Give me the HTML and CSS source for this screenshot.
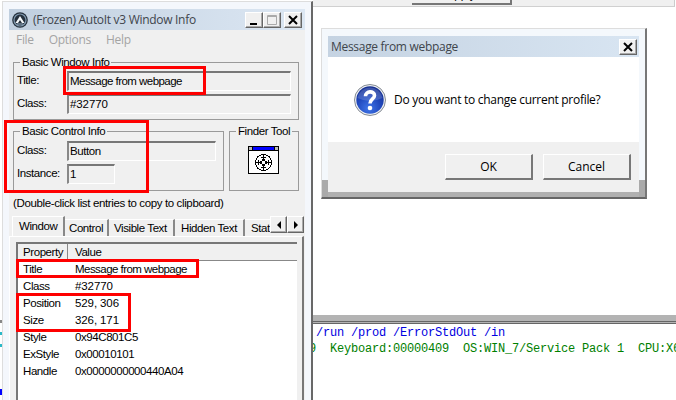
FILE: index.html
```
<!DOCTYPE html>
<html lang="en">
<head>
<meta charset="utf-8">
<title>AutoIt v3 Window Info</title>
<link rel="stylesheet" href="styles.css">
</head>
<body>
<main class="desktop">
  <section class="backdrop">
    <div class="edge"><i></i><i></i><i></i><i></i></div>
    <div class="editor">
      <div class="apply-bar"><span class="apply"><b>Apply</b></span></div>
      <div class="blank"></div>
      <div class="splitter"></div>
      <div class="console">
        <div class="blue">/run /prod /ErrorStdOut /in</div>
        <div class="green">9&nbsp; Keyboard:00000409&nbsp; OS:WIN_7/Service Pack 1&nbsp; CPU:X64</div>
      </div>
    </div>
  </section>

  <section class="window info">
    <header class="titlebar">
      <svg class="logo" width="16" height="16" viewBox="0 0 16 16"><circle cx="8" cy="8" r="7.8" fill="#25303c"/><circle cx="8" cy="8" r="6" fill="none" stroke="#7e97ad" stroke-width="1.2"/><path d="M3.500 11 8 4 12.500 11H10L8 8 6 11Z" fill="#f4f8fb"/><path d="M5 12H11" stroke="#9eb5c9"/></svg>
      <h1>(Frozen) AutoIt v3 Window Info</h1>
      <div class="caption">
        <span class="cap"><svg width="18" height="16"><path d="M5 12H12" stroke="#000" stroke-width="2"/></svg></span>
        <span class="cap"><svg width="18" height="16"><path d="M4.500 3.500H13.500V12.500H4.500ZM4 4.500H14" fill="none" stroke="#aaa"/></svg></span>
        <span class="cap close"><svg width="18" height="16"><path d="M5 4 13 12M13 4 5 12" stroke="#000" stroke-width="2"/></svg></span>
      </div>
    </header>
    <nav class="menu"><span>File</span><span>Options</span><span>Help</span></nav>
    <fieldset class="group window-info">
      <legend>Basic Window Info</legend>
      <div class="row"><label>Title:</label><output class="message">Message from webpage</output></div>
      <div class="row"><label>Class:</label><output class="digits">#32770</output></div>
    </fieldset>
    <div class="groups">
      <fieldset class="group control-info">
        <legend>Basic Control Info</legend>
        <div class="row"><label>Class:</label><output>Button</output></div>
        <div class="row"><label>Instance:</label><output class="short">1</output></div>
      </fieldset>
      <fieldset class="group finder">
        <legend>Finder Tool</legend>
        <svg width="31" height="28" viewBox="0 0 31 28" shape-rendering="crispEdges"><path d="M.5.500H30.500V27.500H.500Z" fill="#fff" stroke="#000"/><path d="M1 1H30V4H1Z" fill="#00f"/><path d="M1 1H4V4H1ZM27 1H30V4H27Z" fill="#bbb"/><path d="M0 4.500H31M4.500 0V4M26.500 0V4" stroke="#000"/><g fill="none" stroke="#000"><circle cx="15.500" cy="16.500" r="8"/><circle cx="15.500" cy="16.500" r="2"/><path d="M15.500 8V14M15.500 19V25M7 16.500H13M18 16.500H24M13 11.500H18M13 21.500H18M10.500 14V19M20.500 14V19M14 13.500H17M14 19.500H17M12.500 15V18M18.500 15V18"/></g></svg>
      </fieldset>
    </div>
    <p class="note">(Double-click list entries to copy to clipboard)</p>
    <div class="tabs">
      <span class="tab active">Window</span><span class="tab t2">Control</span><span class="tab t3">Visible Text</span><span class="tab t4">Hidden Text</span><span class="tab t5">Stat</span>
      <span class="scroll"><svg width="17" height="15"><path d="M10 4V12L6 8Z"/></svg></span><span class="scroll"><svg width="17" height="15"><path d="M6 4V12L10 8Z"/></svg></span>
    </div>
    <div class="panel">
      <div class="list">
        <div class="head"><span>Property</span><span>Value</span></div>
        <div class="item"><span>Title</span><span class="message">Message from webpage</span></div>
        <div class="item"><span>Class</span><span class="digits">#32770</span></div>
        <div class="item"><span>Position</span><span class="digits">529, 306</span></div>
        <div class="item"><span>Size</span><span class="digits">326, 171</span></div>
        <div class="item"><span>Style</span><span>0x94C801C5</span></div>
        <div class="item"><span>ExStyle</span><span>0x00010101</span></div>
        <div class="item"><span>Handle</span><span>0x0000000000440A04</span></div>
      </div>
    </div>
  </section>

  <section class="window dialog">
    <header class="titlebar">
      <h2>Message from webpage</h2>
      <span class="cap close"><svg width="18" height="16"><path d="M5 4 13 12M13 4 5 12" stroke="#000" stroke-width="2"/></svg></span>
    </header>
    <div class="question">
      <svg width="32" height="32" viewBox="0 0 32 32"><defs><radialGradient id="blue" cx=".45" cy=".8" r=".8"><stop offset="0" stop-color="#3f75e8"/><stop offset=".55" stop-color="#2048bd"/><stop offset="1" stop-color="#172f8f"/></radialGradient></defs><circle cx="16" cy="16" r="15.500" fill="#eceff2" stroke="#858b94"/><circle cx="16" cy="16" r="13.700" fill="url(#blue)"/><path d="M3.500 14A12.700 12.700 0 0 1 28.500 14Q16 20 3.500 14Z" fill="#fff" opacity=".16"/><path d="M11.500 12.300C11.500 6.500 20.500 6.500 20.500 11.500C20.500 15 16 14.800 16 19.500" fill="none" stroke="#fff" stroke-width="3.600"/><circle cx="16" cy="24" r="2.300" fill="#fff"/></svg>
      <span>Do you want to change current profile?</span>
    </div>
    <footer class="actions"><button>OK</button><button>Cancel</button></footer>
    <div class="shade"></div>
  </section>

  <i class="mark mark-title"></i>
  <i class="mark mark-control"></i>
  <i class="mark mark-item"></i>
  <i class="mark mark-size"></i>
</main>
</body>
</html>
```
FILE: styles.css
```
* { box-sizing: border-box; }
body { margin: 0; font: 11.5px/14px "Liberation Sans", Arial, sans-serif; color: #000; letter-spacing: -.42px; }
h1, h2, p { margin: 0; font-weight: normal; }
svg { display: block; flex: none; }
.desktop { position: relative; width: 676px; height: 400px; overflow: hidden; background: #fff; }
.backdrop { display: flex; height: 400px; }
.edge { width: 313px; padding-top: 320px; }
.edge i { display: block; width: 2px; height: 3px; margin-bottom: 9px; background: #28b8c8; }
.edge i:first-child { background: #888; }
.edge i:last-child { height: 6px; margin-top: 42px; background: #00f; }
.editor { flex: 1; display: flex; flex-direction: column; min-width: 0; }
.apply-bar { height: 7px; margin-right: 1px; padding-left: 99px; background: #f0f0f0; border-bottom: 1px solid #d0d0d0; border-right: 1px solid #ccc; }
.apply { display: flow-root; width: 100px; height: 5px; text-align: center; border-right: 2px solid #777; border-bottom: 2px solid #777; }
.apply b { display: block; margin-top: -12px; font-weight: normal; letter-spacing: 0; }
.blank { height: 308px; }
.splitter { height: 9px; background: #b3b3b3; border-bottom: 3px double #666; }
.console { flex: 1; padding-top: 1px; overflow: hidden; white-space: nowrap; font: 12px/16px "Liberation Mono", monospace; letter-spacing: -.2px; }
.blue { padding-left: 3px; color: #0000e0; }
.green { margin-left: -4px; color: #008000; }

.window { position: absolute; background: #f4f7fc; }
.titlebar { display: flex; align-items: center; height: 21px; background: linear-gradient(90deg, #c5d3e2, #d8e5f2); font: 12px/17px "Open Sans", "Noto Sans", sans-serif; color: #40454c; letter-spacing: -.3px; white-space: nowrap; }
.titlebar h1, .titlebar h2 { font-size: 12px; }
.cap { width: 18px; height: 16px; background: #f0f0f0; border: 1px solid #fff; border-right: 1px solid #666; border-bottom: 1px solid #666; box-shadow: inset -1px -1px #aaa; }
.cap svg { margin: -1px; }
.info { display: flex; flex-direction: column; left: 2px; top: 1px; width: 311px; height: 430px; padding: 7px 6px 0; border-top: 1px solid #ddd; border-right: 2px solid #686868; border-left: 1px solid #ddd; background: linear-gradient(#f0f0f0, #f0f0f0) 6px 7px / 296px 100% no-repeat, #f4f7fc; }
.info > * { flex-shrink: 0; }
.info .titlebar { padding: 0 3px; background: linear-gradient(90deg, #c0cfdf, #dce7f3); }
.logo { margin-right: 5px; }
.info h1 { flex: 1; }
.caption { display: flex; }
.caption .close { margin-left: 3px; }
.menu { display: flex; gap: 15px; height: 25px; padding: 1px 7px 0; font: 12px/17px "Open Sans", "Noto Sans", sans-serif; letter-spacing: -.3px; color: #a4a4a4; }
.group { margin: 0; padding: 0; border: 1px solid #9a9a9a; min-width: 0; }
legend { padding: 0 2px; line-height: 14px; margin-left: 6px; }
.window-info { width: 286px; height: 65px; margin-left: 4px; }
.row { display: flex; height: 23px; padding-left: 3px; }
.row label { width: 50px; padding-top: 2px; }
.row output { display: block; width: 224px; height: 20px; padding: 1px 1px 0; border: 1px solid #fff; border-top: 2px solid #777; border-left: 2px solid #888; white-space: nowrap; }
.row:first-of-type { margin-top: 2px; }
.groups { display: flex; gap: 5px; height: 71px; padding: 4px 0 0 4px; }
.control-info { width: 211px; }
.control-info .row:first-of-type { margin-top: 3px; }
.control-info output { width: 149px; }
.control-info .short { width: 48px; }
.finder { width: 70px; }
.finder svg { margin: 8px 0 0 18px; }
.message { letter-spacing: -.54px; }
.digits { letter-spacing: -.1px; }
.note { height: 25px; padding: 5px 4px 0; letter-spacing: -.37px; }
.tabs { display: flex; align-items: flex-end; height: 20px; padding-left: 3px; white-space: nowrap; }
.tab { height: 17px; padding-top: 1px; border-right: 2px solid #888; border-top: 1px solid #fff; }
.active { width: 53px; height: 20px; padding-top: 2px; padding-left: 6px; border-left: 1px solid #fff; }
.t2 { width: 44px; padding-left: 4px; }
.t3 { width: 66px; padding-left: 5px; }
.t4 { width: 70px; padding-left: 6px; }
.t5 { width: 25px; padding-left: 6px; border-right: 0; }
.scroll { align-self: flex-start; width: 17px; height: 17px; background: #f0f0f0; border: 1px solid #fff; border-right-color: #666; border-bottom-color: #666; box-shadow: inset -1px -1px #aaa; }
.panel { flex: 1; margin-right: 1px; padding: 5px 5px 0 6px; border-right: 2px solid #777; border-top: 1px solid #fff; border-left: 1px solid #fff; }
.list { height: 200px; background: #fff; border-left: 2px solid #777; border-top: 2px solid #777; }
.head, .item { display: grid; grid-template-columns: 50px 1fr; height: 17px; line-height: 17px; }
.head { background: #f0f0f0; border-bottom: 1px solid #888; }
.head span:first-child { border-right: 1px solid #888; }
.head span, .item span { padding-left: 5px; }
.head span:last-child, .item span:last-child { padding-left: 7px; }
.item { white-space: nowrap; }

.dialog { left: 321px; top: 28px; width: 326px; height: 171px; padding: 7px 6px 0; border: 1px solid #ddd; border-right: 2px solid #777; border-bottom: 2px solid #666; background: linear-gradient(#f4f8fc 151px, #aaa 151px); }
.dialog .titlebar { padding: 0 2px 0 3px; justify-content: space-between; }
.question { display: flex; align-items: center; gap: 8px; height: 85px; padding-left: 26px; background: #fff; font: 12px/17px "Open Sans", "Noto Sans", sans-serif; letter-spacing: -.29px; color: #000; }
.actions { display: flex; gap: 10px; height: 50px; padding: 12px 0 0 117px; background: #f0f0f0; }
button { width: 88px; height: 26px; padding: 0; font: 12px/17px "Open Sans", "Noto Sans", sans-serif; color: #000; background: #f0f0f0; border: 1px solid #fff; border-right: 2px solid #777; border-bottom: 2px solid #777; }
.shade { height: 5px; background: #b0b0b0; }

.mark { position: absolute; border: 3px solid #fe0000; }
.mark-title { left: 63px; top: 66px; width: 143px; height: 29px; }
.mark-control { left: 4px; top: 120px; width: 145px; height: 73px; }
.mark-item { left: 16px; top: 259px; width: 183px; height: 19px; }
.mark-size { left: 16px; top: 293px; width: 115px; height: 39px; }
```
